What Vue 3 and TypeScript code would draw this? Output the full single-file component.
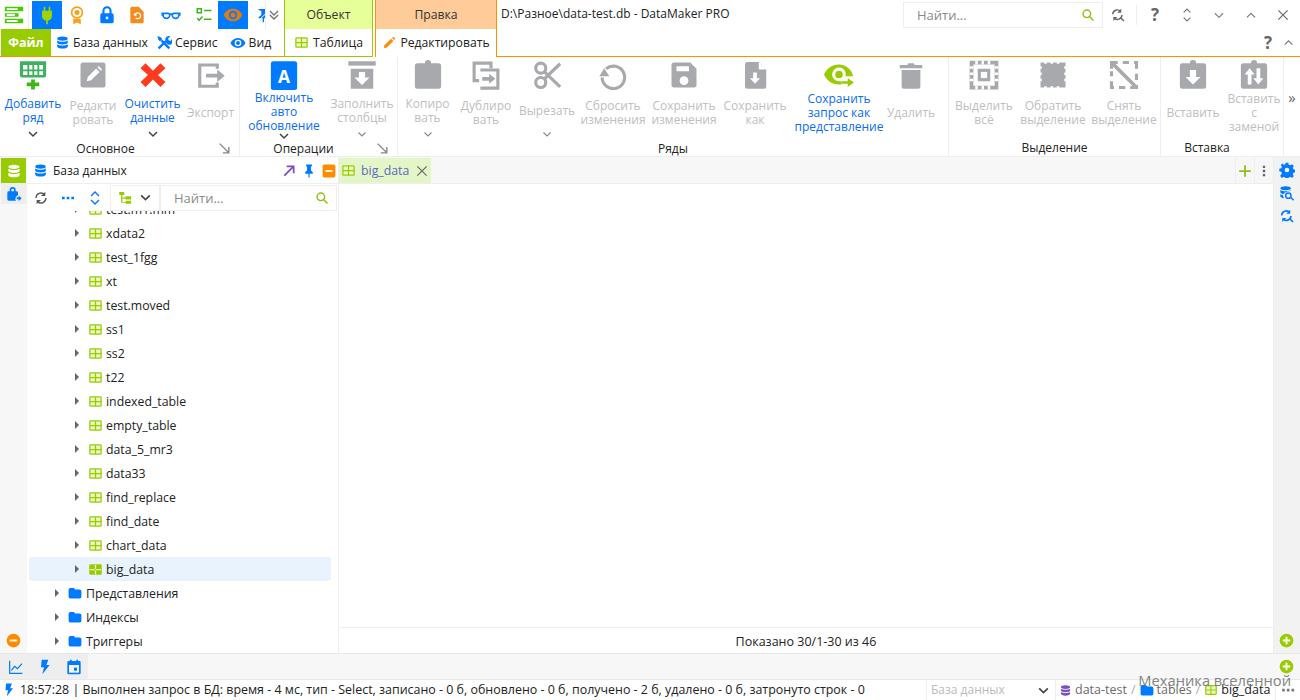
<template>
  <div class="window">
    <header class="head">
      <div class="head-left">
        <div class="qat">
          <span class="qat-menu"><Icon name="stack" :size="22" /></span>
          <span
            v-for="b in quick"
            :key="b.icon"
            class="qat-btn"
            :class="{ on: b.on, cut: b.icon === 'pinCut' }"
            :style="{ width: b.w + 'px' }"
            ><Icon :name="b.icon" :size="b.size || 20"
          /></span>
          <span class="qat-more"><Icon name="dblDown" :size="14" /></span>
        </div>
        <nav class="tabs">
          <span class="file-tab">Файл</span>
          <span class="tab t-db"><Icon name="db" :size="15" />База данных</span>
          <span class="tab t-srv"><Icon name="tools" :size="16" />Сервис</span>
          <span class="tab t-view"><Icon name="eyeBlue" :size="16" />Вид</span>
        </nav>
      </div>
      <div class="ctx ctx-obj">
        <div class="ctx-title">Объект</div>
        <div class="ctx-tab"><Icon name="table" :size="15" />Таблица</div>
      </div>
      <div class="ctx ctx-edit">
        <div class="ctx-title">Правка</div>
        <div class="ctx-tab"><Icon name="pencil" :size="14" />Редактировать</div>
      </div>
      <div class="head-right">
        <div class="title-row">
          <span class="doc-title">D:\Разное\data-test.db - DataMaker PRO</span>
          <div class="search-box top-search">
            <span>Найти...</span><Icon name="search" :size="14" />
          </div>
          <span class="win-btn w1"><Icon name="searchSync" :size="16" /></span>
          <span class="win-sep"></span>
          <span class="win-btn help">?</span>
          <span class="win-btn"><Icon name="updown" :size="16" /></span>
          <span class="win-btn"><Icon name="chevDown" :size="14" /></span>
          <span class="win-btn"><Icon name="chevUp" :size="14" /></span>
          <span class="win-btn"><Icon name="close" :size="14" /></span>
        </div>
        <div class="help-row">
          <span class="help">?</span><Icon name="chevUp" :size="13" />
        </div>
      </div>
    </header>

    <section class="ribbon">
      <div
        v-for="g in groups"
        :key="g.title"
        class="group"
        :style="{ width: g.w + 'px' }"
      >
        <div class="group-btns" :style="{ paddingLeft: g.pad + 'px' }">
          <div
            v-for="b in g.buttons"
            :key="b.icon"
            class="rb"
            :class="{ active: b.active }"
            :style="{ width: b.w + 'px' }"
          >
            <Icon :name="b.icon" :size="30" />
            <div class="rb-label">
              <span v-for="l in b.lines" :key="l">{{ l }}</span>
            </div>
            <Icon
              v-if="b.menu"
              class="rb-chev"
              :name="b.active ? 'chevDark' : 'chevDown'"
              :size="12"
            />
          </div>
        </div>
        <div class="group-title" :style="{ paddingRight: g.titlePad + 'px' }">
          {{ g.title }}
          <Icon v-if="g.launcher" class="launcher" name="launcher" :size="13" />
        </div>
      </div>
      <span class="ribbon-more">»</span>
    </section>

    <main class="main">
      <aside class="rail">
        <span class="rail-on"><Icon name="dbWhite" :size="16" /></span>
        <span class="rail-sec"><Icon name="lockPerson" :size="16" /></span>
        <span class="rail-bottom"><Icon name="minusCircle" :size="15" /></span>
      </aside>

      <section class="side">
        <div class="side-head">
          <Icon name="db" :size="15" />
          <span class="side-title">База данных</span>
          <Icon name="arrowOut" :size="14" />
          <Icon name="pin" :size="14" />
          <Icon name="minusSquare" :size="14" />
        </div>
        <div class="side-tools">
          <span class="tool"><Icon name="sync" :size="16" /></span>
          <span class="tool"><Icon name="dots" :size="16" /></span>
          <span class="tool"><Icon name="updownBlue" :size="16" /></span>
          <span class="tool-select"
            ><Icon name="tree" :size="15" /><Icon name="chevDark" :size="13"
          /></span>
          <div class="search-box side-search">
            <span>Найти...</span><Icon name="search" :size="14" />
          </div>
        </div>
        <div class="tree">
          <div
            v-for="t in tables"
            :key="t"
            class="row leaf"
            :class="{ selected: t === 'big_data' }"
          >
            <i class="caret"></i>
            <Icon :name="t === 'big_data' ? 'tableOn' : 'table'" :size="15" />
            <span>{{ t }}</span>
          </div>
          <div v-for="f in folders" :key="f" class="row node">
            <i class="caret"></i>
            <Icon name="folder" :size="14" />
            <span>{{ f }}</span>
          </div>
        </div>
      </section>

      <section class="work">
        <div class="doc-tabs">
          <div class="doc-tab">
            <Icon name="table" :size="15" />
            <span class="doc-name">big_data</span>
            <Icon name="close" :size="14" />
          </div>
          <span class="doc-spacer"></span>
          <span class="doc-act"><Icon name="plus" :size="14" /></span>
          <span class="doc-act"><Icon name="kebab" :size="14" /></span>
        </div>
        <div class="doc-body"></div>
        <div class="doc-foot">Показано 30/1-30 из 46</div>
      </section>

      <aside class="rail-right">
        <Icon name="gear" :size="16" />
        <Icon name="dbSearch" :size="16" />
        <Icon name="searchSyncBlue" :size="16" />
        <span class="rail-bottom"><Icon name="plusCircle" :size="15" /></span>
      </aside>
    </main>

    <div class="bottom">
      <div class="bottom-tools">
        <Icon name="chart" :size="16" />
        <Icon name="bolt" :size="16" />
        <Icon name="calendar" :size="16" />
      </div>
      <span class="bottom-add"><Icon name="plusCircle" :size="15" /></span>
    </div>

    <footer class="status">
      <Icon name="bolt" :size="14" />
      <span class="status-text"
        >18:57:28 | Выполнен запрос в БД: время - 4 мс, тип - Select, записано - 0 б,
        обновлено - 0 б, получено - 2 б, удалено - 0 б, затронуто строк - 0</span
      >
      <div class="status-combo">
        <span>База данных</span><Icon name="chevDark" :size="13" />
      </div>
      <div class="crumbs">
        <Icon name="dbPurple" :size="13" />
        <span class="c-grey">data-test</span><em>/</em>
        <Icon name="folder" :size="14" />
        <span class="c-grey">tables</span><em>/</em>
        <Icon name="table" :size="14" />
        <span>big_data</span>
      </div>
      <span class="status-dots"><Icon name="dotsGrey" :size="14" /></span>
      <span class="watermark">Механика вселенной</span>
    </footer>
  </div>
</template>

<script setup lang="ts">
import { h } from "vue";

type Part = {
  d?: string;
  fill?: string;
  stroke?: string;
  sw?: number;
  text?: string;
};

const BLUE = "#007aff";
const GREEN = "#99cc00";
const ORANGE = "#ff8c00";
const GREY = "#a7a9ac";
const DARK = "#666";

const f = (d: string, fill: string): Part => ({ d, fill });
const s = (d: string, stroke: string, sw = 2): Part => ({
  d,
  stroke,
  sw,
  fill: "none",
});

const DB =
  "M12 2.5C7.3 2.5 3.5 3.9 3.5 5.8S7.3 9 12 9s8.5-1.3 8.5-3.2S16.7 2.5 12 2.5zM3.5 8.6v3.2c0 1.9 3.8 3.2 8.5 3.2s8.5-1.3 8.5-3.2V8.6C18.700 10 15.500 10.700 12 10.700S5.300 10 3.500 8.600zM3.500 14.600v3.600c0 1.900 3.800 3.300 8.500 3.300s8.500-1.400 8.500-3.300v-3.600c-1.800 1.400-5 2.100-8.500 2.100s-6.700-.7-8.500-2.100z";
const EYE =
  "M12 4.500C6.800 4.500 2.500 7.700.8 12c1.700 4.300 6 7.500 11.200 7.500s9.500-3.200 11.200-7.500C21.500 7.700 17.200 4.500 12 4.500zm0 12.500a5 5 0 1 1 0-10 5 5 0 0 1 0 10zm0-8a3 3 0 1 0 0 6 3 3 0 0 0 0-6z";
const TABLE_OUT = "M4 3.500h16a2 2 0 0 1 2 2v13a2 2 0 0 1-2 2H4a2 2 0 0 1-2-2v-13a2 2 0 0 1 2-2z";
const CLIP =
  "M9.500 2.500a2.500 2.500 0 0 1 5 0h6a2 2 0 0 1 2 2v16.500a2 2 0 0 1-2 2h-17a2 2 0 0 1-2-2V4.500a2 2 0 0 1 2-2z";

const icons: Record<string, Part[]> = {
  stack: [
    f("M2 3h20v5H2zM2 10h15v4H2zM2 16h20v5H2z", "#44cc00"),
    f("M4 4.500h12v2H4zM4 17.500h12v2H4z", "#fff"),
    f("M4 11h9v2H4z", "#fff"),
  ],
  plug: [f("M8 2h2v5h4V2h2v5h2v6a6 6 0 0 1-5 5.900V23h-2v-4.100A6 6 0 0 1 6 13V7h2z", "#9fd400")],
  award: [
    s("M12 2.500a6.500 6.500 0 1 0 0 13 6.500 6.500 0 0 0 0-13z", "#f9a11b", 2),
    f("M12 6a3 3 0 1 0 0 6 3 3 0 0 0 0-6z", "#f9a11b"),
    f("M7.500 16.500h9V23l-4.500-2-4.500 2z", "#f9a11b"),
  ],
  lock: [
    f("M12 1.500a5.500 5.500 0 0 0-5.500 5.500v3H6a2 2 0 0 0-2 2v8a2 2 0 0 0 2 2h12a2 2 0 0 0 2-2v-8a2 2 0 0 0-2-2h-.5V7A5.500 5.500 0 0 0 12 1.500zM9 10V7a3 3 0 0 1 6 0v3z", BLUE),
    f("M10.500 14h3v3h-3z", "#fff"),
  ],
  fileUndo: [
    f("M6 2h8l6 6v12a2 2 0 0 1-2 2H6a2 2 0 0 1-2-2V4a2 2 0 0 1 2-2z", "#f58a1f"),
    s("M9.500 12a3.500 3.500 0 1 1 1 3.500M8.500 10.500l1 2 2-1", "#fff", 1.600),
  ],
  glasses: [
    s("M1.500 10h7a2 2 0 0 1 2 2 4 4 0 0 1-8 0h-1zM22.500 10h-7a2 2 0 0 0-2 2 4 4 0 0 0 8 0h1zM10.500 11h3", BLUE, 2),
  ],
  check: [
    s("M3 3.500h5.500v5.500H3zM12 6h10M12 17.500h10", "#3fb618", 2),
    s("M3 16l2.500 3L10 14", "#3fb618", 2),
  ],
  eyeOrange: [f(EYE, "#e07a12")],
  pinCut: [
    f("M3 3h14v2l-3 1v6l4 3v2h-6v6h-2v-6H4v-2l4-3V6L5 5z", BLUE),
    s("M2 22L22 3", "#fff", 1.500),
  ],
  dblDown: [s("M5 5l7 7 7-7M5 12l7 7 7-7", "#777", 2.500)],
  db: [f(DB, BLUE)],
  dbWhite: [f(DB, "#fff")],
  dbPurple: [f(DB, "#7a4fc4")],
  tools: [
    s("M4 20L15 9M20 20L8 8", BLUE, 3.500),
    f("M14 8a5.500 5.500 0 0 1 7.500-6l-3.500 3.500 1 2.500 2.500 1 2.500-3.500A5.500 5.500 0 0 1 16 13z", BLUE),
    f("M2 1.500l5 2L9.500 6 6 9.500 3.500 7z", BLUE),
  ],
  eyeBlue: [f(EYE, BLUE)],
  table: [
    f(TABLE_OUT, GREEN),
    f("M4 5.500h7v5.500H4zM13 5.500h7v5.500h-7zM4 13h7v5.500H4zM13 13h7v5.500h-7z", "#ebf7c4"),
  ],
  tableOn: [
    f(TABLE_OUT, GREEN),
    f("M11 4h2v16h-2zM3 11h18v2H3z", "#e6f5b8"),
  ],
  pencil: [
    f("M3 21l1.200-5.200L15.500 4.500l4 4L8.200 19.800z", ORANGE),
    f("M17 3l1.500-1a1.500 1.500 0 0 1 2 0l1.500 1.500a1.500 1.500 0 0 1 0 2L21 7z", ORANGE),
  ],
  search: [s("M10 3.500a6.500 6.500 0 1 0 0 13 6.500 6.500 0 0 0 0-13zM15 15l6.500 6.500", "#8fbf1a", 2.500)],
  searchSync: [
    s("M4 11a7 7 0 0 1 12-4.500M18 12a7 7 0 0 1-12 4.500M16 16l5 5", DARK, 2.200),
    f("M16.800 2.500v6h-6zM5 21v-6h6z", DARK),
  ],
  searchSyncBlue: [
    s("M4 11a7 7 0 0 1 12-4.500M18 12a7 7 0 0 1-12 4.500M16 16l5 5", BLUE, 2.500),
    f("M16.800 2.500v6h-6zM5 21v-6h6z", BLUE),
  ],
  updown: [s("M7 8l5-5 5 5M7 16l5 5 5-5", "#777", 1.800)],
  updownBlue: [s("M6 9l6-6 6 6M6 15l6 6 6-6", BLUE, 2)],
  chevDown: [s("M5 9l7 7 7-7", "#888", 2.200)],
  chevDark: [s("M4 8l8 8 8-8", "#444", 3)],
  chevUp: [s("M5 16l7-7 7 7", "#777", 2)],
  close: [s("M4 4l16 16M20 4L4 20", "#666", 2)],
  launcher: [s("M3 3l17 17M20 9v11H9", "#888", 2.500)],
  addRow: [
    f("M1.500 1h21v11a2 2 0 0 1-2 2h-17a2 2 0 0 1-2-2z", "#3fb060"),
    f("M4 4h3.500v3.500H4zM9 4h2.500v3.500H9zM13 4h2.500v3.500H13zM17 4h3v3.500h-3z", "#fff"),
    f("M4 9h3.500v3H4zM9 9h2.500v3H9zM13 9h2.500v3H13zM17 9h3v3h-3z", "#fff"),
    f("M10.500 15.500h3v2.500h3.500v3h-3.500v2.500h-3V21H7v-3h3.500z", "#3fb618"),
  ],
  edit: [
    f("M4 2h16a2 2 0 0 1 2 2v16a2 2 0 0 1-2 2H4a2 2 0 0 1-2-2V4a2 2 0 0 1 2-2z", GREY),
    f("M7 17l.8-3.500 6.700-6.700 2.700 2.700-6.700 6.700zM15.500 5.800l1-1 2.700 2.700-1 1z", "#fff"),
  ],
  redX: [f("M6 2.500l6 6 6-6 4 4-6 5.500 6 5.500-4 4-6-6-6 6-4-4 6-5.500-6-5.500z", "#ff3b1f")],
  export: [
    s("M17 7V4H3v17h14v-3", GREY, 2.500),
    f("M8 11h9V7.500l6 5-6 5V14H8z", GREY),
  ],
  auto: [
    f("M3.500 1h17a2 2 0 0 1 2 2v19a2 2 0 0 1-2 2h-17a2 2 0 0 1-2-2V3a2 2 0 0 1 2-2z", BLUE),
    { text: "A", fill: "#fff" },
  ],
  archive: [
    f("M1 1h22v3.500H1z", GREY),
    f("M3 7h18v16H3z", GREY),
    f("M9.500 9.500h5V14H18l-6 6-6-6h3.500z", "#fff"),
  ],
  clip: [f(CLIP, GREY)],
  duplicate: [
    s("M16 6.500V2.500H2.500v14h4", GREY, 2.500),
    s("M7.500 8h14v14.500h-14", GREY, 2.500),
    f("M9 13.500h5.500V11l5 4-5 4v-2.500H9z", GREY),
  ],
  scissors: [
    s("M7 2.500a4 4 0 1 0 0 8 4 4 0 0 0 0-8zM7 14a4 4 0 1 0 0 8 4 4 0 0 0 0-8z", GREY, 2.500),
    s("M10 9.500L22.500 21.500M10 15L22.500 3", GREY, 2.500),
  ],
  reset: [
    s("M6.500 7A9 9 0 1 1 3.300 14", GREY, 2.500),
    f("M1 13l4-6.500L9 13z", GREY),
  ],
  save: [
    f("M4 2h13l5 5v13a2 2 0 0 1-2 2H4a2 2 0 0 1-2-2V4a2 2 0 0 1 2-2z", GREY),
    f("M6 5h10v4H6z", "#fff"),
    f("M12 13a3.500 3.500 0 1 0 0 7 3.500 3.500 0 0 0 0-7z", "#fff"),
  ],
  saveAs: [
    f("M6 1.500h9l6 6V21a2 2 0 0 1-2 2H6a2 2 0 0 1-2-2V3.500a2 2 0 0 1 2-2z", GREY),
    f("M15 1.500l6 6h-6z", "#fff"),
    f("M10.500 10h3v4.500H16L12 19l-4-4.500h2.500z", "#fff"),
  ],
  eyeSave: [
    f("M12 3.500C6.500 3.500 2 6.800 0 11.500 2 16.200 6.500 19.500 12 19.500h2v-2.500h-2a5.500 5.500 0 1 1 5.300-4h6C22.700 8.200 17.800 3.500 12 3.500z", GREEN),
    f("M12 8.500a3 3 0 1 0 0 6 3 3 0 0 0 0-6z", GREEN),
    f("M14 17h5v-2.500l5 3.500-5 3.500V19h-5z", GREEN),
  ],
  trash: [
    f("M3 4h6l1-1.500h4L15 4h6v2.500H3z", GREY),
    f("M4.500 8h15v13a2 2 0 0 1-2 2h-11a2 2 0 0 1-2-2z", GREY),
  ],
  selectAll: [
    { d: "M2 2h20v20H2z", stroke: GREY, sw: 3, fill: "none" },
    f("M7 7h10v10H7z", GREY),
    f("M9.500 9.500h5v5h-5z", "#fff"),
    f("M5 .5h2v3H5zM10 .5h2v3h-2zM15 .5h2v3h-2zM5 20.500h2v3H5zM10 20.500h2v3h-2zM15 20.500h2v3h-2zM.5 5h3v2h-3zM.5 10h3v2h-3zM.5 15h3v2h-3zM20.500 5h3v2h-3zM20.500 10h3v2h-3zM20.500 15h3v2h-3z", "#fff"),
  ],
  invert: [
    f("M2 2h20v20H2z", GREY),
    f("M5 .5h2v2.500H5zM10 .5h2v2.500h-2zM15 .5h2v2.500h-2zM5 21h2v2.500H5zM10 21h2v2.500h-2zM15 21h2v2.500h-2zM.5 5H3v2H.5zM.5 10H3v2H.5zM.5 15H3v2H.5zM21 5h2.500v2H21zM21 10h2.500v2H21zM21 15h2.500v2H21z", "#fff"),
  ],
  deselect: [
    s("M2 7V2h5M11 2h5M20 2h2v5M22 11v5M22 20v2h-5M13 22H8M4 22H2v-5M2 13V9", GREY, 2.500),
    s("M2 2l20 20", GREY, 3),
  ],
  paste: [
    f(CLIP, GREY),
    f("M9.500 8h5v5.500H18l-6 6-6-6h3.500z", "#fff"),
  ],
  pasteReplace: [
    f(CLIP, GREY),
    f("M8.500 6.500l4 5h-2.500v8H7v-8H4.500zM14 6.500h3v8h2.500l-4 5-4-5H14z", "#fff"),
  ],
  arrowOut: [s("M4 20L19 5M8 4h12v12", "#7a4fc4", 3)],
  pin: [f("M7 1h10v2.500l-1.500 1V11l3 3v2.500H13V23h-2v-6.500H5.500V14l3-3V4.500L7 3.500z", BLUE)],
  minusSquare: [
    f("M4 1h16a3 3 0 0 1 3 3v16a3 3 0 0 1-3 3H4a3 3 0 0 1-3-3V4a3 3 0 0 1 3-3z", ORANGE),
    f("M6 10.500h12v3H6z", "#fff"),
  ],
  minusCircle: [
    f("M12 1a11 11 0 1 0 0 22 11 11 0 0 0 0-22z", ORANGE),
    f("M6 10.500h12v3H6z", "#fff"),
  ],
  plusCircle: [
    f("M12 1a11 11 0 1 0 0 22 11 11 0 0 0 0-22z", GREEN),
    f("M10.500 6h3v4.500H18v3h-4.500V18h-3v-4.500H6v-3h4.500z", "#fff"),
  ],
  lockPerson: [
    f("M10 1.500a4.500 4.500 0 0 0-4.500 4.500v2H4a2 2 0 0 0-2 2v10a2 2 0 0 0 2 2h11a4 4 0 0 1-1-2.500 6 6 0 0 1 4-5.500V10a2 2 0 0 0-2-2h-1.500V6A4.500 4.500 0 0 0 10 1.500zM8 8V6a2 2 0 0 1 4 0v2z", BLUE),
    f("M19 14.500l4.500 4-4.500 4V20h-3v-3h3z", BLUE),
  ],
  sync: [
    s("M4.500 12a7.500 7.500 0 0 1 12.500-5.500M19.500 12A7.500 7.500 0 0 1 7 17.500", "#555", 2),
    f("M18.500 2.500V9h-6.500zM5.500 21.500V15H12z", "#555"),
  ],
  dots: [f("M3 10h4v4H3zM10 10h4v4h-4zM17 10h4v4h-4z", BLUE)],
  dotsGrey: [f("M2 10h4.500v4.500H2zM10 10h4.500v4.500H10zM18 10h4.500v4.500H18z", "#777")],
  tree: [
    f("M2 3h8v5H7v4h5V10h9v5h-9v-1H7v5h5v-2h9v5h-9v-1.500H5V8H2z", GREEN),
  ],
  folder: [
    f("M4 3.500h6l2.500 2.500H20a3 3 0 0 1 3 3v9.500a3 3 0 0 1-3 3H4a3 3 0 0 1-3-3v-12a3 3 0 0 1 3-3z", BLUE),
  ],
  plus: [f("M10.500 2h3v8.500H22v3h-8.500V22h-3v-8.500H2v-3h8.500z", "#8fbf1a")],
  kebab: [f("M10 3h4v4h-4zM10 10h4v4h-4zM10 17h4v4h-4z", "#666")],
  gear: [
    f("M12 8.500a3.500 3.500 0 1 0 0 7 3.500 3.500 0 0 0 0-7zM10 1h4l.6 3 2.400 1 2.500-1.700 2.800 2.800-1.700 2.500 1 2.400 3 .6v4l-3 .6-1 2.400 1.700 2.500-2.800 2.800-2.500-1.700-2.400 1-.6 3h-4l-.6-3-2.400-1-2.500 1.700-2.800-2.800L4.400 17l-1-2.400-3-.6v-4l3-.6 1-2.400-1.700-2.500 2.800-2.800L7 4.400l2.400-1z", BLUE),
  ],
  dbSearch: [
    f("M10 2C5.600 2 2 3.300 2 5s3.600 3 8 3 8-1.300 8-3-3.600-3-8-3zM2 7.500V11c0 1.200 1.700 2.200 4.500 2.700A7 7 0 0 1 12.500 10c2-.2 4-.9 5.500-1.900V7.500c-1.700 1.300-4.700 2-8 2s-6.300-.7-8-2zM2 13.500V17c0 1.400 2.300 2.500 5.500 2.900a7 7 0 0 1-1.300-4.400C4.500 15.100 3 14.400 2 13.500z", BLUE),
    s("M14 12a4 4 0 1 0 0 8 4 4 0 0 0 0-8zM17 18l5 5", BLUE, 2.200),
  ],
  chart: [s("M2.500 2.500v19h19M5 17l5-6 4 3.500L21 7", BLUE, 1.800)],
  bolt: [f("M7 1h10l-3 8h5L8 23l2.500-10.500H6z", BLUE)],
  calendar: [
    f("M6 1h2.500v2h7V1H18v2h2a2 2 0 0 1 2 2v16a2 2 0 0 1-2 2H4a2 2 0 0 1-2-2V5a2 2 0 0 1 2-2h2z", BLUE),
    f("M4.500 9h15v11.500h-15z", "#f4f4f4"),
    f("M12 13h4.500v4.500H12z", BLUE),
  ],
};

const Icon = (props: { name: string; size: number }) =>
  h(
    "svg",
    {
      width: props.size,
      height: props.size,
      viewBox: "0 0 24 24",
      style: "flex:none;display:block",
    },
    (icons[props.name] || []).map((p) =>
      p.text
        ? h(
            "text",
            {
              x: 12,
              y: 18,
              fill: p.fill,
              "text-anchor": "middle",
              "font-size": 16,
              "font-weight": 700,
              "font-family": "'Liberation Mono', monospace",
            },
            p.text
          )
        : h("path", {
            d: p.d,
            fill: p.fill,
            stroke: p.stroke,
            "stroke-width": p.sw,
            "fill-rule": "evenodd",
          })
    )
  );
Icon.props = ["name", "size"];

const quick = [
  { icon: "plug", w: 30, on: true },
  { icon: "award", w: 30 },
  { icon: "lock", w: 30 },
  { icon: "fileUndo", w: 30 },
  { icon: "glasses", w: 37 },
  { icon: "check", w: 29, size: 18 },
  { icon: "eyeOrange", w: 30, on: true },
  { icon: "pinCut", w: 17, size: 16 },
];

type Btn = {
  icon: string;
  lines: string[];
  w: number;
  active?: boolean;
  menu?: boolean;
};

const groups: {
  title: string;
  w: number;
  pad: number;
  titlePad: number;
  launcher?: boolean;
  buttons: Btn[];
}[] = [
  {
    title: "Основное",
    w: 240,
    pad: 3,
    titlePad: 28,
    launcher: true,
    buttons: [
      { icon: "addRow", lines: ["Добавить", "ряд"], w: 60, active: true, menu: true },
      { icon: "edit", lines: ["Редакти", "ровать"], w: 60 },
      { icon: "redX", lines: ["Очистить", "данные"], w: 59, active: true, menu: true },
      { icon: "export", lines: ["Экспорт"], w: 57 },
    ],
  },
  {
    title: "Операции",
    w: 158,
    pad: 5,
    titlePad: 30,
    launcher: true,
    buttons: [
      { icon: "auto", lines: ["Включить", "авто", "обновление"], w: 78, active: true, menu: true },
      { icon: "archive", lines: ["Заполнить", "столбцы"], w: 78, menu: true },
    ],
  },
  {
    title: "Ряды",
    w: 551,
    pad: 1,
    titlePad: 0,
    buttons: [
      { icon: "clip", lines: ["Копиро", "вать"], w: 57, menu: true },
      { icon: "duplicate", lines: ["Дублиро", "вать"], w: 60 },
      { icon: "scissors", lines: ["Вырезать"], w: 62, menu: true },
      { icon: "reset", lines: ["Сбросить", "изменения"], w: 70 },
      { icon: "save", lines: ["Сохранить", "изменения"], w: 72 },
      { icon: "saveAs", lines: ["Сохранить", "как"], w: 70 },
      { icon: "eyeSave", lines: ["Сохранить", "запрос как", "представление"], w: 98, active: true },
      { icon: "trash", lines: ["Удалить"], w: 46 },
    ],
  },
  {
    title: "Выделение",
    w: 212,
    pad: 2,
    titlePad: 0,
    buttons: [
      { icon: "selectAll", lines: ["Выделить", "всё"], w: 66 },
      { icon: "invert", lines: ["Обратить", "выделение"], w: 72 },
      { icon: "deselect", lines: ["Снять", "выделение"], w: 70 },
    ],
  },
  {
    title: "Вставка",
    w: 123,
    pad: 2,
    titlePad: 30,
    buttons: [
      { icon: "paste", lines: ["Вставить"], w: 60 },
      { icon: "pasteReplace", lines: ["Вставить", "с", "заменой"], w: 62 },
    ],
  },
];

const tables = [
  "test.m1.mm",
  "xdata2",
  "test_1fgg",
  "xt",
  "test.moved",
  "ss1",
  "ss2",
  "t22",
  "indexed_table",
  "empty_table",
  "data_5_mr3",
  "data33",
  "find_replace",
  "find_date",
  "chart_data",
  "big_data",
];
const folders = ["Представления", "Индексы", "Триггеры"];
</script>

<style>
html,
body {
  margin: 0;
  overflow: hidden;
  background: #fff;
}
</style>

<style scoped>
.window {
  width: 1300px;
  height: 700px;
  display: flex;
  flex-direction: column;
  font-family: "Open Sans", "Noto Sans", sans-serif;
  font-size: 12px;
  line-height: 14px;
  color: #222;
  background: #fff;
  overflow: hidden;
}

/* header */
.head {
  height: 57px;
  display: flex;
  flex: none;
}
.head-left {
  width: 284px;
  flex: none;
  border-bottom: 1px solid #ff9100;
}
.qat {
  height: 29px;
  padding-top: 1px;
  display: flex;
  align-items: stretch;
  box-sizing: border-box;
}
.qat-menu {
  width: 29px;
  padding-left: 3px;
  box-sizing: border-box;
  display: flex;
  align-items: center;
  border-right: 1px solid #eee;
  margin-right: 3px;
}
.qat-btn {
  display: flex;
  align-items: center;
  justify-content: center;
  overflow: hidden;
}
.qat-btn.on {
  background: #007aff;
}
.qat-btn.cut {
  justify-content: flex-start;
  padding-left: 8px;
  box-sizing: border-box;
}
.qat-more {
  width: 17px;
  display: flex;
  align-items: center;
  justify-content: center;
  border-left: 1px solid #eee;
  box-sizing: border-box;
}
.tabs {
  height: 27px;
  display: flex;
  align-items: center;
  font-size: 12.2px;
}
.file-tab {
  width: 50px;
  margin-left: 1px;
  height: 27px;
  line-height: 27px;
  text-align: center;
  font-weight: 700;
  font-size: 12.5px;
  color: #fff;
  background: #99cc00;
}
.tab {
  display: flex;
  align-items: center;
  gap: 3px;
}
.t-db {
  margin-left: 4px;
}
.t-srv {
  margin-left: 8px;
}
.t-view {
  margin-left: 12px;
}
.ctx {
  flex: none;
  font-size: 12.2px;
}
.ctx-title {
  height: 29px;
  line-height: 30px;
  text-align: center;
  box-sizing: border-box;
  color: #333;
}
.ctx-tab {
  height: 27px;
  display: flex;
  align-items: center;
  justify-content: center;
  gap: 4px;
}
.ctx-obj {
  width: 89px;
  border-left: 1px solid #99cc00;
  border-right: 1px solid #99cc00;
  box-sizing: border-box;
  border-bottom: 1px solid #99cc00;
  margin-right: 2px;
}
.ctx-obj .ctx-title {
  background: #e6ff99;
}
.ctx-edit {
  width: 122px;
  box-sizing: border-box;
  border-left: 1px solid #ff9100;
  border-right: 1px solid #ff9100;
}
.ctx-edit .ctx-title {
  background: #ffcc99;
}
.head-right {
  flex: 1;
  border-bottom: 1px solid #ff9100;
  min-width: 0;
}
.title-row {
  height: 29px;
  display: flex;
  align-items: center;
  padding-left: 4px;
}
.doc-title {
  width: 402px;
  flex: none;
  white-space: nowrap;
  margin-bottom: 1px;
  font-size: 12px;
}
.search-box {
  box-sizing: border-box;
  display: flex;
  align-items: center;
  justify-content: space-between;
  border: 1px solid #eee;
  color: #8a8a8a;
  font-size: 13px;
}
.top-search {
  width: 200px;
  height: 26px;
  padding: 0 7px 0 13px;
  flex: none;
}
.win-btn {
  width: 32px;
  flex: none;
  display: flex;
  justify-content: center;
  align-items: center;
}
.win-btn.w1 {
  width: 30px;
  margin-right: 3px;
}
.win-sep {
  width: 1px;
  height: 20px;
  background: #eee;
  flex: none;
  margin-right: 2px;
}
.help {
  font-size: 17px;
  font-weight: 700;
  color: #666;
}
.help-row {
  display: flex;
  justify-content: flex-end;
  align-items: center;
  gap: 10px;
  height: 27px;
  padding-right: 5px;
}

/* ribbon */
.ribbon {
  height: 100px;
  flex: none;
  display: flex;
  border-bottom: 1px solid #eee;
  box-sizing: border-box;
}
.group {
  flex: none;
  box-sizing: border-box;
  border-right: 1px solid #eee;
  display: flex;
  flex-direction: column;
}
.group-btns {
  display: flex;
  height: 83px;
}
.rb {
  flex: none;
  display: flex;
  flex-direction: column;
  align-items: center;
  padding-top: 3px;
  box-sizing: border-box;
  color: #c0bebe;
}
.rb.active {
  color: #0a6cf0;
}
.rb-label {
  height: 44px;
  margin-top: 1px;
  display: flex;
  flex-direction: column;
  justify-content: center;
  align-items: center;
  white-space: nowrap;
}
.rb-chev {
  margin-top: -3px;
}
.group-title {
  flex: 1;
  position: relative;
  text-align: center;
  font-size: 12px;
  line-height: 17px;
  color: #222;
}
.group .launcher {
  position: absolute;
  right: 8px;
  top: 2px;
}
.ribbon-more {
  flex: 1;
  text-align: center;
  font-size: 15px;
  line-height: 80px;
  color: #666;
}

/* main area */
.main {
  flex: 1;
  min-height: 0;
  display: flex;
}
.rail {
  width: 27px;
  flex: none;
  background: #f7f7f7;
  position: relative;
}
.rail-on {
  height: 25px;
  margin: 1px 1px 0;
  background: #99cc00;
  display: flex;
  align-items: center;
  justify-content: center;
}
.rail-sec {
  height: 21px;
  margin-left: 1px;
  background: #eee;
  display: flex;
  align-items: center;
  justify-content: center;
}
.rail-bottom {
  position: absolute;
  bottom: 5px;
  left: 6px;
}
.side {
  width: 312px;
  flex: none;
  box-sizing: border-box;
  border-right: 1px solid #eee;
  display: flex;
  flex-direction: column;
  min-height: 0;
}
.side-head {
  height: 27px;
  flex: none;
  display: flex;
  align-items: center;
  gap: 6px;
  padding: 1px 2px 0 6px;
  box-sizing: border-box;
  border-bottom: 1px solid #eee;
}
.side-title {
  flex: 1;
  margin-left: -1px;
}
.side-tools {
  height: 27px;
  flex: none;
  display: flex;
  align-items: center;
  box-sizing: border-box;
  position: relative;
  z-index: 1;
  background: #fff;
}
.tool {
  width: 27px;
  display: flex;
  justify-content: center;
}
.tool-select {
  width: 50px;
  height: 26px;
  margin-left: 2px;
  box-sizing: border-box;
  border: 1px solid #eee;
  display: flex;
  align-items: center;
  justify-content: center;
  gap: 6px;
}
.side-search {
  width: 177px;
  height: 26px;
  padding: 0 7px 0 13px;
}
.tree {
  flex: 1;
  min-height: 0;
  overflow: hidden;
}
.row {
  height: 24px;
  display: flex;
  align-items: center;
  border-radius: 3px;
  margin: 0 7px 0 2px;
  font-size: 12.3px;
  white-space: nowrap;
}
.row span {
  margin-top: 1px;
}
.row:first-child {
  margin-top: -14px;
}
.leaf {
  padding-left: 46px;
}
.node {
  padding-left: 26px;
}
.leaf svg {
  margin: 0 3px 0 6px;
}
.node svg {
  margin: 0 4px 0 6px;
}
.selected {
  background: #e8f3fd;
}
.caret {
  width: 0;
  height: 0;
  border-left: 4px solid #666;
  border-top: 4px solid transparent;
  border-bottom: 4px solid transparent;
  margin-right: 3px;
}
.work {
  flex: 1;
  min-width: 0;
  display: flex;
  flex-direction: column;
}
.doc-tabs {
  height: 27px;
  flex: none;
  box-sizing: border-box;
  padding-top: 1px;
  background: #f7f7f7;
  border-bottom: 1px solid #eee;
  display: flex;
}
.doc-tab {
  width: 92px;
  flex: none;
  background: #e4f5c8;
  display: flex;
  align-items: center;
  padding: 0 2px;
  gap: 5px;
  box-sizing: border-box;
  color: #5b6abf;
  font-size: 12.3px;
}
.doc-name {
  flex: 1;
}
.doc-spacer {
  flex: 1;
}
.doc-act {
  width: 18px;
  display: flex;
  align-items: center;
  justify-content: center;
  border-left: 1px solid #eee;
}
.doc-body {
  flex: 1;
}
.doc-foot {
  height: 26px;
  flex: none;
  border-top: 1px solid #eee;
  text-align: center;
  line-height: 27px;
  box-sizing: border-box;
  font-size: 12.5px;
}
.rail-right {
  width: 27px;
  flex: none;
  background: #f2f2f2;
  border-left: 1px solid #eee;
  box-sizing: border-box;
  position: relative;
  display: flex;
  flex-direction: column;
  align-items: center;
  padding-top: 5px;
  gap: 7px;
}
.rail-right .rail-bottom {
  bottom: 5px;
  left: 5px;
}

/* bottom */
.bottom {
  height: 27px;
  flex: none;
  box-sizing: border-box;
  background: #f7f7f7;
  border-top: 1px solid #e8e8e8;
  border-bottom: 1px solid #e8e8e8;
  display: flex;
  justify-content: space-between;
  align-items: center;
}
.bottom-tools {
  width: 88px;
  height: 100%;
  background: #eee;
  display: flex;
  align-items: center;
  gap: 13px;
  padding-left: 8px;
  box-sizing: border-box;
}
.bottom-add {
  margin-right: 6px;
}
.status {
  height: 20px;
  flex: none;
  display: flex;
  align-items: center;
  padding-left: 2px;
  position: relative;
  white-space: nowrap;
  font-size: 12.45px;
}
.status-text {
  width: 906px;
  flex: none;
  margin-left: 4px;
}
.status-combo {
  width: 130px;
  flex: none;
  height: 100%;
  box-sizing: border-box;
  border-left: 1px solid #eee;
  border-right: 1px solid #eee;
  padding: 0 5px 0 4px;
  display: flex;
  align-items: center;
  justify-content: space-between;
  color: #bbb;
  font-size: 12px;
}
.crumbs {
  flex: 1;
  display: flex;
  align-items: center;
  gap: 3px;
  padding-left: 3px;
  font-size: 12.5px;
}
.crumbs em {
  font-style: normal;
  color: #aaa;
  margin: 0 1px;
}
.c-grey {
  color: #6b6b6b;
}
.status-dots {
  width: 25px;
  height: 100%;
  display: flex;
  align-items: center;
  justify-content: center;
  border-left: 1px solid #eee;
  box-sizing: border-box;
}
.watermark {
  position: absolute;
  right: 9px;
  top: -7px;
  font-size: 14.7px;
  color: #777;
  opacity: 0.9;
  pointer-events: none;
}
</style>
